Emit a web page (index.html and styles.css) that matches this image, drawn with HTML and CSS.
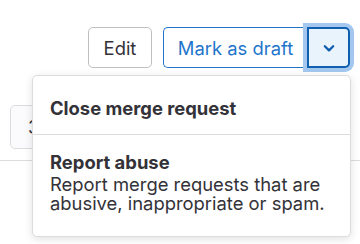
FILE: index.html
```html
<!DOCTYPE html>
<html>
<head>
<meta charset="utf-8">
<link rel="stylesheet" href="styles.css">
</head>
<body>
<div class="page">
  <div class="actions">
    <button class="btn btn-edit">Edit</button>
    <div class="split">
      <button class="btn btn-draft">Mark as draft</button>
      <button class="btn btn-toggle" aria-label="More actions">
        <svg width="16" height="16" viewBox="0 0 16 16"><path d="M3.8 6.2l4.2 4.2 4.2-4.2" fill="none" stroke="#0b5cad" stroke-width="2.2" stroke-linecap="round" stroke-linejoin="round"/></svg>
      </button>
    </div>
  </div>
  <div class="under">
    <div class="under-box"><span class="under-text">3</span></div>
  </div>
  <div class="rule"></div>

  <div class="menu">
    <div class="group">
      <div class="item"><span class="item-title">Close merge request</span></div>
    </div>
    <div class="group group-last">
      <div class="item">
        <span class="item-title">Report abuse</span>
        <span class="item-desc">Report merge requests that are abusive, inappropriate or spam.</span>
      </div>
    </div>
  </div>
</div>
</body>
</html>
```

FILE: styles.css
```css
* { box-sizing: border-box; }
html, body { margin: 0; padding: 0; background: #fff; }
body {
  font-family: Inter, "Liberation Sans", Arial, sans-serif;
  font-size: 18.4px;
  color: #333238;
  width: 360px;
  height: 244px;
  overflow: hidden;
}
.page { position: relative; height: 244px; }

.actions {
  display: flex;
  justify-content: flex-end;
  align-items: center;
  gap: 11px;
  padding: 27px 10px 0 0;
}
.btn {
  font-family: inherit;
  font-size: 18.4px;
  height: 41px;
  display: flex;
  align-items: center;
  justify-content: center;
  background: #fff;
  margin: 0;
  cursor: pointer;
}
.btn-edit {
  width: 64px;
  border: 1px solid #bfbfc3;
  border-radius: 5px;
  color: #333238;
}
.split { display: flex; }
.btn-draft {
  width: 144px;
  border: 1px solid #1f75cb;
  border-right: 0;
  border-radius: 5px 0 0 5px;
  color: #1f75cb;
}
.btn-toggle {
  position: relative;
  width: 43px;
  border: 2px solid #0f5fb0;
  border-radius: 0 5px 5px 0;
  background: #e9f3fc;
  box-shadow: 0 0 0 4px #a3c7ee;
  padding: 0;
}

.under { padding: 37px 0 0 10px; }
.under-box {
  width: 60px;
  height: 44px;
  border: 1px solid #dcdcde;
  border-radius: 5px;
  background: #fbfafd;
  display: flex;
  align-items: center;
  padding-left: 17px;
}
.under-text { color: #333238; font-size: 18.4px; }
.rule { margin-top: 11px; height: 1px; background: #dcdcde; }

.menu {
  position: absolute;
  left: 32px;
  top: 75px;
  width: 319px;
  height: 162px;
  background: #fff;
  border: 1px solid #dcdcde;
  border-radius: 5px;
  box-shadow: 0 2px 8px rgba(5, 5, 6, 0.12);
}
.group { padding: 20px 17px 13px; border-bottom: 1px solid #dcdcde; }
.group-last { border-bottom: 0; padding-top: 15px; }
.item { display: flex; flex-direction: column; }
.item-title { font-weight: 700; line-height: 25px; color: #333238; }
.item-desc { line-height: 19px; color: #333238; }
```
